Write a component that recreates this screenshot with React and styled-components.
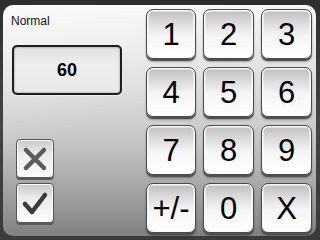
import React from 'react'
import styled, { createGlobalStyle } from 'styled-components'

const Global = createGlobalStyle`
  html, body { margin: 0; padding: 0; background: #3a3a3a; }
  * { box-sizing: border-box; }
`

const Frame = styled.div`
  width: 320px;
  height: 240px;
  padding: 5px 4px 4px 3px;
  background: linear-gradient(to bottom, #2e2e2e, #444 50%, #3a3a3a);
  font-family: "Liberation Sans", Arial, sans-serif;
`

const Panel = styled.div`
  height: 100%;
  border-radius: 10px;
  display: flex;
  background:
    linear-gradient(160deg, rgba(255,255,255,0.55) 0%, rgba(255,255,255,0.15) 30%, rgba(255,255,255,0) 45%),
    linear-gradient(to bottom, #f4f4f4 0%, #dedede 35%, #c2c2c2 62%, #969696 88%, #808080 100%);
  box-shadow: inset 0 1px 0 rgba(255,255,255,0.6);
`

const Side = styled.div`
  width: 143px;
  padding: 9px 0 0 9px;
  display: flex;
  flex-direction: column;
`

const Label = styled.div`
  font-size: 12px;
  line-height: 14px;
  color: #111;
  margin-left: -1px;
`

const Display = styled.div`
  margin-top: 17px;
  width: 110px;
  height: 50px;
  border: 2px solid #1e1e1e;
  border-radius: 5px;
  background: linear-gradient(to bottom, #e0e0e0, #eeeeee 40%, #e8e8e8);
  box-shadow: inset 0 0 2px rgba(0,0,0,0.5), 0 1px 1px rgba(255,255,255,0.5);
  display: flex;
  align-items: center;
  justify-content: center;
  font-size: 18px;
  font-weight: bold;
  color: #000;
`

const Actions = styled.div`
  margin-top: 44px;
  margin-left: 4px;
  display: flex;
  flex-direction: column;
  gap: 5px;
`

const IconButton = styled.div`
  width: 38px;
  height: ${p => p.$h}px;
  border: 1px solid #555;
  border-radius: 4px;
  background: linear-gradient(to bottom, #c8c8c8 0%, #eaeaea 35%, #fdfdfd 100%);
  box-shadow: inset 0 0 0 1px #fff, 0 2px 0 #5a5a5a;
  display: flex;
  align-items: center;
  justify-content: center;
`

const Keypad = styled.div`
  padding: 4px 0 0 0;
  display: grid;
  grid-template-columns: 50px 51px 51px;
  grid-template-rows: repeat(4, 50px);
  column-gap: 7px;
  row-gap: 8px;
`

const Key = styled.div`
  border: 1px solid #4a4a4a;
  border-radius: 7px;
  background: linear-gradient(to bottom, #bdbdbd 0%, #d9d9d9 25%, #f6f6f6 55%, #ffffff 100%);
  box-shadow: inset 0 0 0 1.5px #fafafa, 0 2px 0 #505050, 0 3px 2px rgba(0,0,0,0.3);
  display: flex;
  align-items: center;
  justify-content: center;
  font-size: 31px;
  color: #000;
  padding-top: 2px;
  white-space: nowrap;
`

const keys = ['1', '2', '3', '4', '5', '6', '7', '8', '9', '+/-', '0', 'X']

export default function App() {
  return (
    <>
      <Global />
      <Frame>
        <Panel>
          <Side>
            <Label>Normal</Label>
            <Display>60</Display>
            <Actions>
              <IconButton $h={39}>
                <svg width="26" height="26" viewBox="0 0 26 26">
                  <path d="M4 4 L22 22 M22 4 L4 22" stroke="#5a5a5a" strokeWidth="4.5" strokeLinecap="round" />
                </svg>
              </IconButton>
              <IconButton $h={40}>
                <svg width="28" height="28" viewBox="0 0 28 28">
                  <path d="M4 15 L11 23 L24 6" fill="none" stroke="#3a3a3a" strokeWidth="4.5" strokeLinecap="round" strokeLinejoin="round" />
                </svg>
              </IconButton>
            </Actions>
          </Side>
          <Keypad>
            {keys.map(k => (
              <Key key={k}>{k}</Key>
            ))}
          </Keypad>
        </Panel>
      </Frame>
    </>
  )
}
